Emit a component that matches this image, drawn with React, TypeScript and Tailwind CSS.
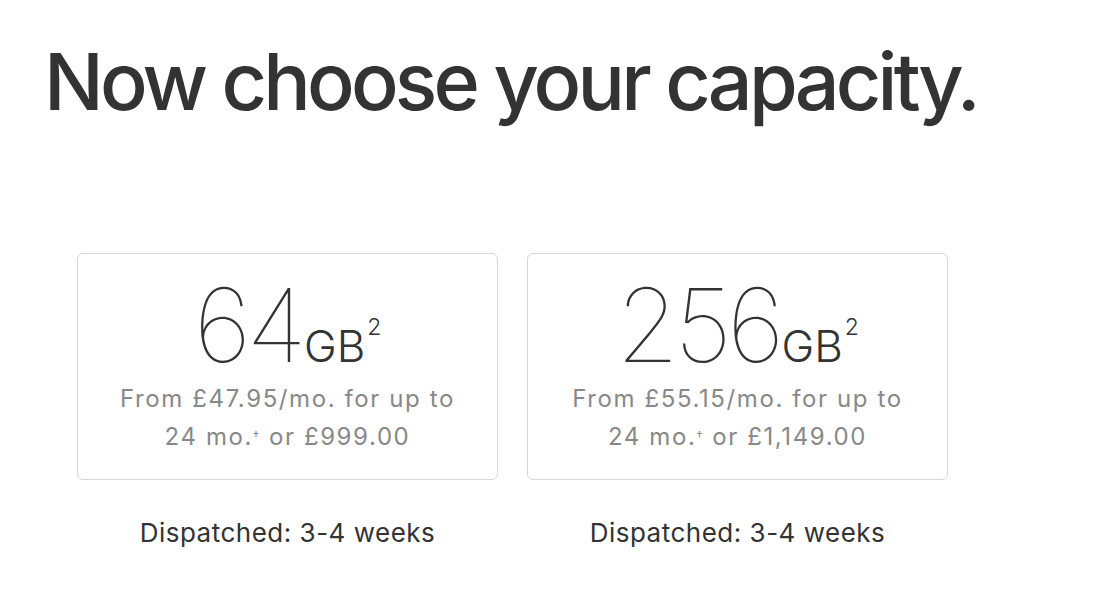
const options = [
  { size: "64", monthly: "£47.95", total: "£999.00" },
  { size: "256", monthly: "£55.15", total: "£1,149.00" },
];

function CapacityCard({ size, monthly, total }: { size: string; monthly: string; total: string }) {
  return (
    <div className="flex w-[421px] flex-col items-center">
      <div className="flex h-[227px] w-full flex-col items-center rounded-[6px] border border-[#d6d6d6] pt-[21px]">
        <div className="flex items-baseline text-[#333]">
          <span className="text-[102px] font-thin leading-[100px] tracking-[-5px]">{size}</span>
          <span className="ml-[2px] text-[44px] font-light leading-none">GB</span>
          <sup className="relative top-[-27px] ml-[2px] text-[23px] font-light leading-none">2</sup>
        </div>
        <p className="mt-[5px] text-center text-[24px] leading-[38px] tracking-[1.6px] text-[#888]">
          From {monthly}/mo. for up to
          <br />
          24 mo.<sup className="relative top-[-5px] text-[12px]">†</sup> or {total}
        </p>
      </div>
      <p className="mt-[38px] text-[26px] leading-[30px] tracking-[0.5px] text-[#333]">Dispatched: 3-4 weeks</p>
    </div>
  );
}

export default function App() {
  return (
    <div className="h-[608px] w-[1100px] bg-white px-[44px] pt-[35px]" style={{ fontFamily: "Inter, 'Noto Sans', sans-serif" }}>
      <h1 className="text-[79px] font-medium leading-[92px] tracking-[-3.8px] text-[#333]">Now choose your capacity.</h1>
      <div className="mt-[126px] flex gap-[29px] pl-[33px]">
        {options.map((o) => (
          <CapacityCard key={o.size} {...o} />
        ))}
      </div>
    </div>
  );
}
